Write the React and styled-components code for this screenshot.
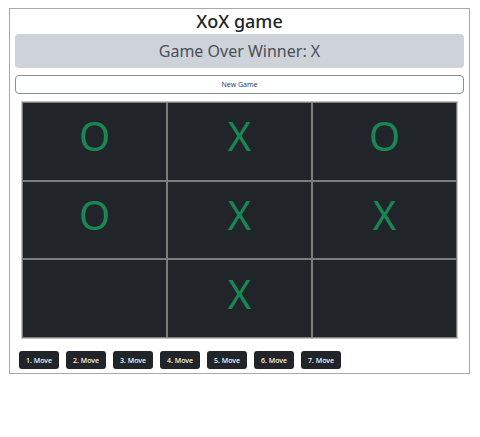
import React from 'react';
import styled, { createGlobalStyle } from 'styled-components';

const GlobalStyle = createGlobalStyle`
  body {
    margin: 0;
    background: #fff;
    font-family: "Noto Sans", "Open Sans", sans-serif;
    color: #212529;
  }
`;

const Frame = styled.div`
  box-sizing: border-box;
  width: 461px;
  margin: 8px 0 0 9px;
  border: 1px solid #a9a9a9;
  padding: 0 5px 4px 5px;
  display: flex;
  flex-direction: column;
`;

const Title = styled.h1`
  margin: 0;
  height: 25px;
  font-size: 18px;
  font-weight: 500;
  line-height: 25px;
  text-align: center;
`;

const Status = styled.div`
  height: 34px;
  border-radius: 4px;
  background: #ced3da;
  color: #495057;
  font-size: 16px;
  line-height: 34px;
  text-align: center;
`;

const NewGameButton = styled.button`
  box-sizing: border-box;
  height: 19px;
  margin-top: 7px;
  border: 1px solid #8a8f95;
  border-radius: 4px;
  background: #fff;
  color: #3b3b6b;
  font-family: inherit;
  font-size: 7px;
  padding: 0;
`;

const Board = styled.div`
  box-sizing: border-box;
  width: 437px;
  height: 238px;
  margin: 7px 0 0 6px;
  border: 1px solid #c8c8c8;
  display: grid;
  grid-template-columns: repeat(3, 1fr);
  grid-template-rows: repeat(3, 1fr);
  background: #212529;
`;

const Cell = styled.div`
  border: 1px solid #7d7d7d;
  display: flex;
  align-items: center;
  justify-content: center;
  padding-bottom: 10px;
  color: #198754;
  font-size: 40px;
  font-weight: 400;
  line-height: 1;
`;

const Moves = styled.div`
  display: flex;
  gap: 7px;
  margin: 12px 0 0 4px;
`;

const MoveButton = styled.button`
  box-sizing: border-box;
  width: 40px;
  height: 18px;
  padding: 0;
  border: none;
  border-radius: 3px;
  background: #212529;
  color: #fff;
  font-family: inherit;
  font-size: 7px;
  font-weight: 500;
`;

const board = ['O', 'X', 'O', 'O', 'X', 'X', '', 'X', ''];

export default function App() {
  return (
    <>
      <GlobalStyle />
      <Frame>
        <Title>XoX game</Title>
        <Status>Game Over Winner: X</Status>
        <NewGameButton>New Game</NewGameButton>
        <Board>
          {board.map((v, i) => (
            <Cell key={i}>{v}</Cell>
          ))}
        </Board>
        <Moves>
          {[1, 2, 3, 4, 5, 6, 7].map((n) => (
            <MoveButton key={n}>{n}. Move</MoveButton>
          ))}
        </Moves>
      </Frame>
    </>
  );
}
